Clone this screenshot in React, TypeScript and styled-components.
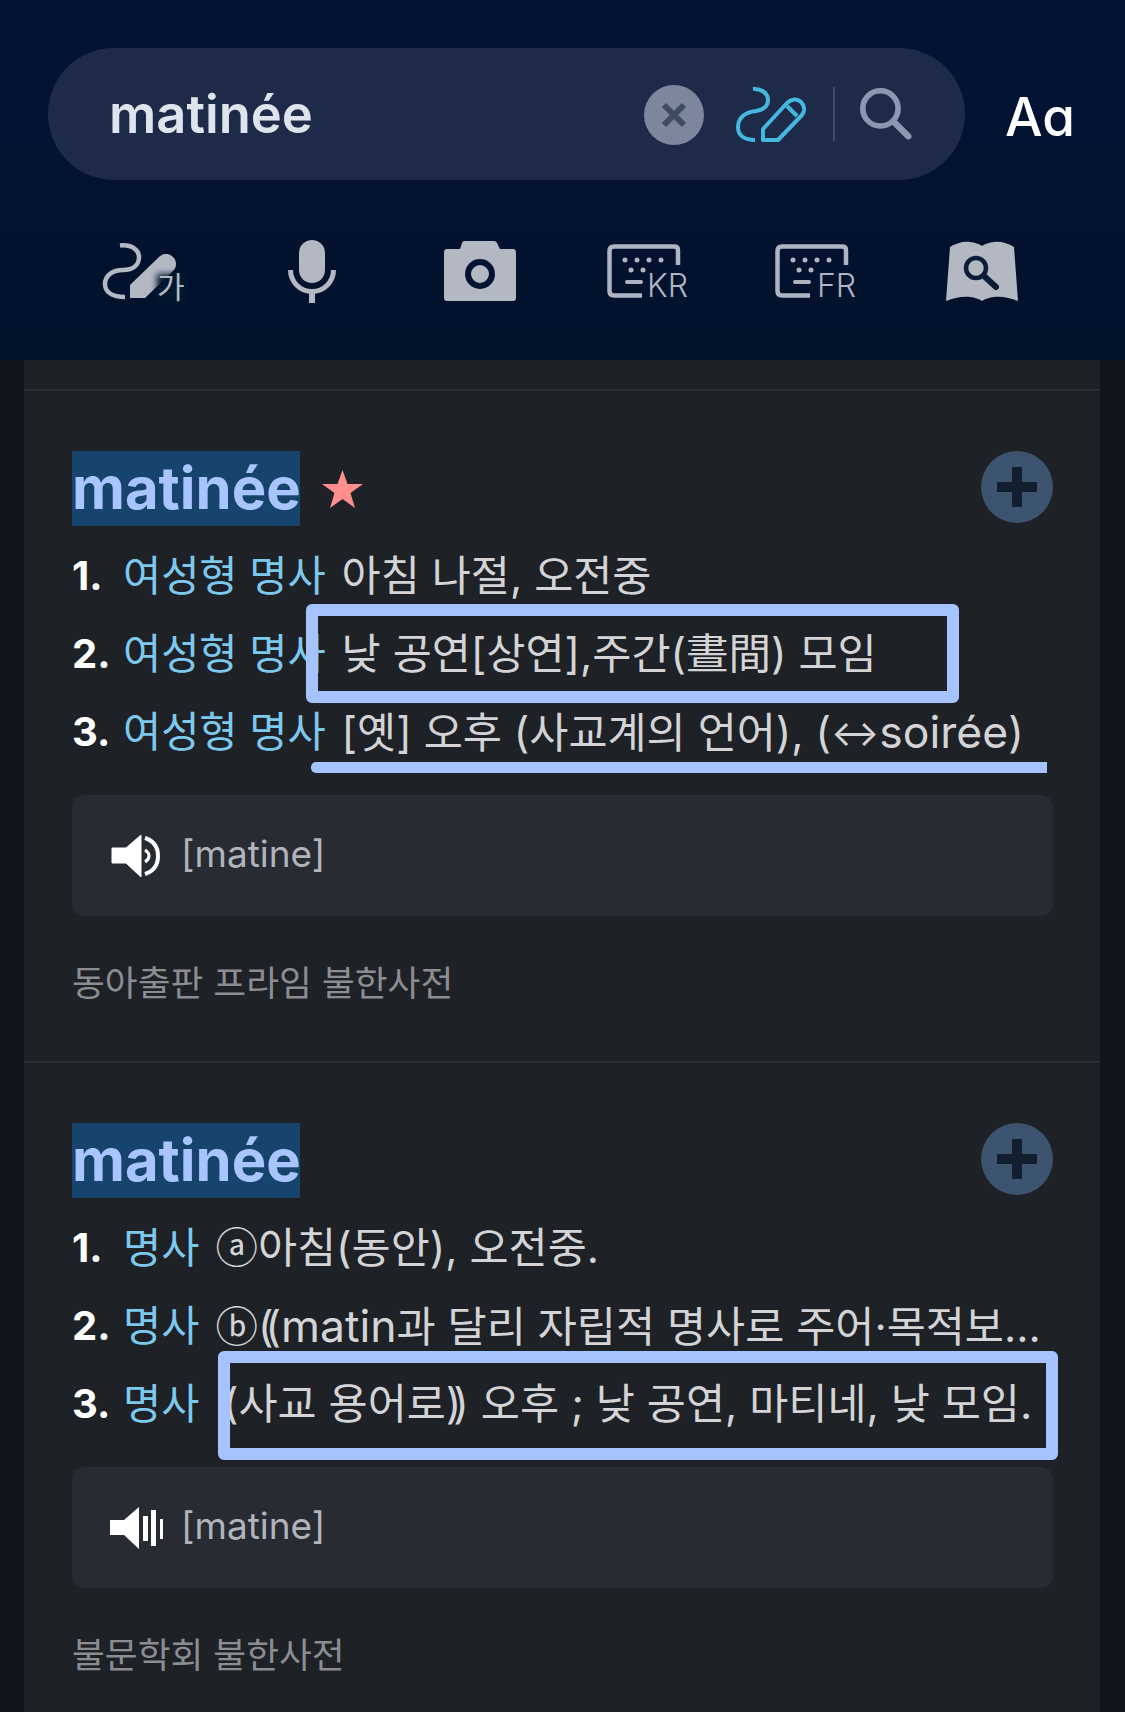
import * as React from 'react';
import styled, { createGlobalStyle } from 'styled-components';

const FONT = `Inter, "Noto Sans CJK KR", "Noto Sans", sans-serif`;

const GlobalStyle = createGlobalStyle`
  html, body {
    margin: 0;
    padding: 0;
    background: #11161d;
  }
  body {
    font-family: ${FONT};
  }
`;

const Page = styled.div`
  width: 1125px;
  height: 1712px;
  overflow: hidden;
  display: flex;
  flex-direction: column;
`;

const Header = styled.header`
  height: 360px;
  flex: none;
  box-sizing: border-box;
  padding: 48px 0 0 48px;
  background: linear-gradient(180deg, #031336 0%, #02122b 100%);
`;

const SearchRow = styled.div`
  display: flex;
  align-items: center;
`;

const SearchPill = styled.div`
  width: 917px;
  height: 132px;
  box-sizing: border-box;
  padding: 0 53px 0 61px;
  display: flex;
  align-items: center;
  border-radius: 66px;
  background: #1e2b48;
`;

const SearchText = styled.span`
  flex: 1;
  font-size: 52.5px;
  font-weight: 600;
  color: #dfe3ee;
`;

const ClearButton = styled.span`
  width: 60px;
  height: 60px;
  flex: none;
  margin-top: 2px;
  border-radius: 50%;
  background: #7c869d;
  display: flex;
  align-items: center;
  justify-content: center;
`;

const PenSlot = styled.span`
  display: flex;
  flex: none;
  margin: 0 26px 0 31px;
`;

const Separator = styled.span`
  width: 2px;
  height: 54px;
  flex: none;
  background: #3e4c66;
  margin-right: 25px;
`;

const SearchSlot = styled.span`
  display: flex;
  flex: none;
`;

const FontSize = styled.span`
  margin-left: 40px;
  margin-top: 6px;
  font-size: 53px;
  font-weight: 500;
  line-height: 1;
  color: #ffffff;
  font-feature-settings: 'cv11' 1;
`;

const ToolRow = styled.div`
  display: grid;
  grid-template-columns: repeat(6, 167.5px);
  margin: 59px 0 0 13px;
  height: 64px;
  align-items: center;
  justify-items: center;
`;

const Card = styled.main`
  flex: 1;
  margin: 0 25px 0 24px;
  background: #1e2126;
  padding-top: 29px;
`;

const Section = styled.section`
  border-top: 2px solid #2b2e33;
  padding: 60px 47px 53px 48px;
`;

const TitleRow = styled.div`
  display: flex;
  align-items: center;
  height: 75px;
  margin-bottom: 10px;
`;

const Word = styled.h2`
  margin: 0;
  width: 228px;
  height: 75px;
  line-height: 75px;
  background: #17446c;
  color: #a8c5ff;
  font-size: 58px;
  font-weight: 700;
  white-space: nowrap;
`;

const StarSlot = styled.span`
  display: flex;
  margin-left: 22px;
`;

const AddButton = styled.span`
  width: 72px;
  height: 72px;
  margin-left: auto;
  margin-bottom: 3px;
  border-radius: 50%;
  background: #3d5470;
  display: flex;
  align-items: center;
  justify-content: center;
`;

const Row = styled.div`
  position: relative;
  display: flex;
  height: 78px;
  line-height: 80px;
  white-space: nowrap;
`;

const Num = styled.span`
  width: 51px;
  flex: none;
  font-size: 40px;
  font-weight: 700;
  color: #ffffff;
`;

const Pos = styled.span`
  flex: none;
  font-size: 41.5px;
  color: #7dc9ee;
  margin-right: 16px;
`;

const Definition = styled.span`
  font-size: 42.5px;
  color: #d4d4d6;
`;

const TightPair = styled.span`
  letter-spacing: -8px;
  margin-right: 8px;
`;

const ArrowGlyph = styled.span`
  font-size: 36px;
  vertical-align: 2px;
`;

const LatinWord = styled.span`
  font-size: 44.5px;
`;

const MarkerBox = styled.div<{ $left: number; $top: number; $width: number; $height: number }>`
  position: absolute;
  left: ${(p) => p.$left}px;
  top: ${(p) => p.$top}px;
  width: ${(p) => p.$width}px;
  height: ${(p) => p.$height}px;
  box-sizing: border-box;
  border: 12px solid #a4c3ff;
  border-radius: 6px;
`;

const MarkerLine = styled.div`
  position: absolute;
  left: 239px;
  top: 70px;
  width: 736px;
  height: 11px;
  background: #a4c3ff;
  border-radius: 5px 0 0 5px;
`;

const AudioBox = styled.div`
  height: 121px;
  margin-top: 25px;
  box-sizing: border-box;
  padding-left: 28px;
  display: flex;
  align-items: center;
  border-radius: 12px;
  background: #282b31;
`;

const SpeakerSlot = styled.span`
  width: 72px;
  flex: none;
  display: flex;
  justify-content: center;
  margin-right: 9px;
`;

const Phonetic = styled.span`
  font-size: 37px;
  color: #b1b4bb;
  padding-bottom: 4px;
`;

const Source = styled.div`
  margin-top: 42px;
  height: 50px;
  line-height: 50px;
  font-size: 35.7px;
  color: #8b8d91;
`;

const Svg = styled.svg`
  display: block;
  overflow: visible;
`;

const ICON_GREY = '#b3b8c3';

const PenIcon = () => (
  <Svg width="72" height="57" viewBox="0 0 72 57" fill="none" stroke="#44b8e0" strokeWidth="4">
    <path d="M18 3C27 2 33 8 33 14C33 21 27 24 21 25C10 26 3 32 3 41C3 50 10 54 20 54" />
    <path d="M28 54L28 43L52 17C56 13 62 12 66 16C70 20 70 25 67 29L43 54Z" strokeLinejoin="round" />
    <path d="M52 20L62 30" />
  </Svg>
);

const SearchIcon = () => (
  <Svg width="52" height="52" viewBox="0 0 56 56" fill="none" stroke="#8c97b1">
    <circle cx="22" cy="22" r="19" strokeWidth="6" />
    <path d="M36 36L52 52" strokeWidth="7" strokeLinecap="round" />
  </Svg>
);

const HandwriteIcon = () => (
  <Svg width="83" height="56" viewBox="0 0 83 56">
    <defs>
      <filter id="fade" x="-50%" y="-50%" width="200%" height="200%">
        <feGaussianBlur stdDeviation="3" />
      </filter>
    </defs>
    <path
      d="M17 2.500C30 1 36 8 36 14C36 22 30 27 20 27C9 27 2 33 2 41C2 49 9 54 22 54"
      fill="none"
      stroke={ICON_GREY}
      strokeWidth="4.5"
    />
    <path d="M27 55V42L56 14C60 10 66 10 70 14C74 18 74 24 70 28L42 55Z" fill={ICON_GREY} />
    <rect x="54" y="31" width="30" height="28" fill="#02122f" filter="url(#fade)" />
    <text x="54" y="55" fontSize="30" fill={ICON_GREY} fontFamily={FONT}>
      가
    </text>
  </Svg>
);

const MicIcon = () => (
  <Svg width="48" height="63" viewBox="0 0 48 63" fill="none" stroke={ICON_GREY} strokeWidth="5">
    <rect x="11" y="0" width="26" height="43" rx="13" fill={ICON_GREY} stroke="none" />
    <path d="M2.5 30A21.5 21.5 0 0 0 45.5 30" />
    <path d="M24 51V63" strokeWidth="6" />
  </Svg>
);

const CameraIcon = () => (
  <Svg width="72" height="60" viewBox="0 0 72 60">
    <path
      d="M20 0H50C51.5 0 52.5 1 53 2L56 8H69C70.7 8 72 9.3 72 11V57C72 58.7 70.7 60 69 60H3C1.3 60 0 58.7 0 57V11C0 9.3 1.3 8 3 8H16L18 2C18.5 1 19 0 20 0Z"
      fill={ICON_GREY}
    />
    <circle cx="36" cy="33" r="12" fill="none" stroke="#021233" strokeWidth="6" />
  </Svg>
);

const KeyboardIcon = ({ lang, x }: { lang: string; x: number }) => (
  <Svg width="80" height="54" viewBox="0 0 80 54">
    <path
      d="M71 21V6Q71 2.500 67 2.500H7Q2.500 2.500 2.500 7V47Q2.500 51.500 7 51.500H35"
      fill="none"
      stroke="#aeb4c1"
      strokeWidth="4.5"
    />
    {[18, 30, 42, 54].map((cx) => (
      <circle key={cx} cx={cx} cy="16" r="2.500" fill="#aeb4c1" />
    ))}
    {[24, 36].map((cx) => (
      <circle key={cx} cx={cx} cy="26" r="2.500" fill="#aeb4c1" />
    ))}
    <path d="M20 38H34" stroke="#aeb4c1" strokeWidth="4" strokeLinecap="round" />
    <text x={x} y="53" fontSize="32" fontWeight="300" fill="#aeb4c1" fontFamily={FONT}>
      {lang}
    </text>
  </Svg>
);

const BookIcon = () => (
  <Svg width="72" height="60" viewBox="0 0 72 60">
    <path
      d="M4 6C10 2 18 0 24 1C29 1.500 33 3 36 5C39 3 43 1.500 48 1C54 0 62 2 68 6L72 60C64 57 56 55 48 56C43 56.500 39 58 36 60C33 58 29 56.500 24 56C16 55 8 57 0 60Z"
      fill={ICON_GREY}
    />
    <circle cx="30" cy="27" r="10" fill="none" stroke="#0c1b36" strokeWidth="4.5" />
    <path d="M38 35L50 46" stroke="#0c1b36" strokeWidth="6" strokeLinecap="round" />
  </Svg>
);

const StarIcon = () => (
  <Svg width="41" height="38" viewBox="0 0 41 38">
    <polygon points="20.500,0 25.500,14 41,14 28.500,23 33,38 20.500,29 8,38 12.500,23 0,14 15.500,14" fill="#ff8f8f" />
  </Svg>
);

const PlusIcon = () => (
  <Svg width="40" height="40" viewBox="0 0 40 40">
    <path d="M15 0H25V15H40V25H25V40H15V25H0V15H15Z" fill="#111f30" />
  </Svg>
);

const SpeakerBody = () => <polygon points="0,13 14,13 29,0 29,42 14,28 0,28" fill="#ffffff" />;

const SpeakerWaves = () => (
  <Svg width="48" height="42" viewBox="0 0 48 42" fill="none" stroke="#ffffff">
    <SpeakerBody />
    <path d="M33 3C42 6 46 13 46 21C46 29 42 36 33 39" strokeWidth="4" />
    <path d="M33 15C36 17 37 19 37 21C37 23 36 25 33 27" strokeWidth="3" />
  </Svg>
);

const SpeakerBars = () => (
  <Svg width="53" height="42" viewBox="0 0 53 42" fill="#ffffff">
    <SpeakerBody />
    <rect x="33" y="9" width="5" height="25" />
    <rect x="41" y="3" width="5" height="36" />
    <rect x="50" y="12" width="3" height="20" />
  </Svg>
);

// the source app sets doubled brackets and the arrow tighter, and latin words larger, than one font does
const renderDefinition = (text: string) =>
  text.split(/(\(\(|\)\)|↔|[a-zé]+)/).map((part, index) => {
    if (part === '↔') return <ArrowGlyph key={index}>{part}</ArrowGlyph>;
    if (part === '((' || part === '))') return <TightPair key={index}>{part}</TightPair>;
    if (/^[a-zé]+$/.test(part)) return <LatinWord key={index}>{part}</LatinWord>;
    return part;
  });

type Sense = { pos: string; text: string; marker?: React.ReactNode };

type Entry = { star?: boolean; senses: Sense[]; speaker: React.ReactNode; source: string };

const entries: Entry[] = [
  {
    star: true,
    speaker: <SpeakerWaves />,
    source: '동아출판 프라임 불한사전',
    senses: [
      { pos: '여성형 명사', text: '아침 나절, 오전중' },
      {
        pos: '여성형 명사',
        text: '낮 공연[상연],주간(晝間) 모임',
        marker: <MarkerBox $left={234} $top={-10} $width={653} $height={99} />,
      },
      { pos: '여성형 명사', text: '[옛] 오후 (사교계의 언어), (↔soirée)', marker: <MarkerLine /> },
    ],
  },
  {
    speaker: <SpeakerBars />,
    source: '불문학회 불한사전',
    senses: [
      { pos: '명사', text: 'ⓐ아침(동안), 오전중.' },
      { pos: '명사', text: 'ⓑ((matin과 달리 자립적 명사로 주어·목적보...' },
      {
        pos: '명사',
        text: '((사교 용어로)) 오후 ; 낮 공연, 마티네, 낮 모임.',
        marker: <MarkerBox $left={146} $top={-13} $width={840} $height={109} />,
      },
    ],
  },
];

export default function App() {
  return (
    <Page>
      <GlobalStyle />
      <Header>
        <SearchRow>
          <SearchPill>
            <SearchText>matinée</SearchText>
            <ClearButton>
              <Svg width="24" height="24" viewBox="0 0 24 24">
                <path d="M2 2L22 22M22 2L2 22" stroke="#3f4a63" strokeWidth="6" />
              </Svg>
            </ClearButton>
            <PenSlot>
              <PenIcon />
            </PenSlot>
            <Separator />
            <SearchSlot>
              <SearchIcon />
            </SearchSlot>
          </SearchPill>
          <FontSize>Aa</FontSize>
        </SearchRow>
        <ToolRow>
          <HandwriteIcon />
          <MicIcon />
          <CameraIcon />
          <KeyboardIcon lang="KR" x={40} />
          <KeyboardIcon lang="FR" x={42} />
          <BookIcon />
        </ToolRow>
      </Header>
      <Card>
        {entries.map((entry) => (
          <Section key={entry.source}>
            <TitleRow>
              <Word>matinée</Word>
              {entry.star && (
                <StarSlot>
                  <StarIcon />
                </StarSlot>
              )}
              <AddButton>
                <PlusIcon />
              </AddButton>
            </TitleRow>
            {entry.senses.map((sense, index) => (
              <Row key={sense.text}>
                <Num>{index + 1}.</Num>
                <Pos>{sense.pos}</Pos>
                <Definition>{renderDefinition(sense.text)}</Definition>
                {sense.marker}
              </Row>
            ))}
            <AudioBox>
              <SpeakerSlot>{entry.speaker}</SpeakerSlot>
              <Phonetic>[matine]</Phonetic>
            </AudioBox>
            <Source>{entry.source}</Source>
          </Section>
        ))}
      </Card>
    </Page>
  );
}
